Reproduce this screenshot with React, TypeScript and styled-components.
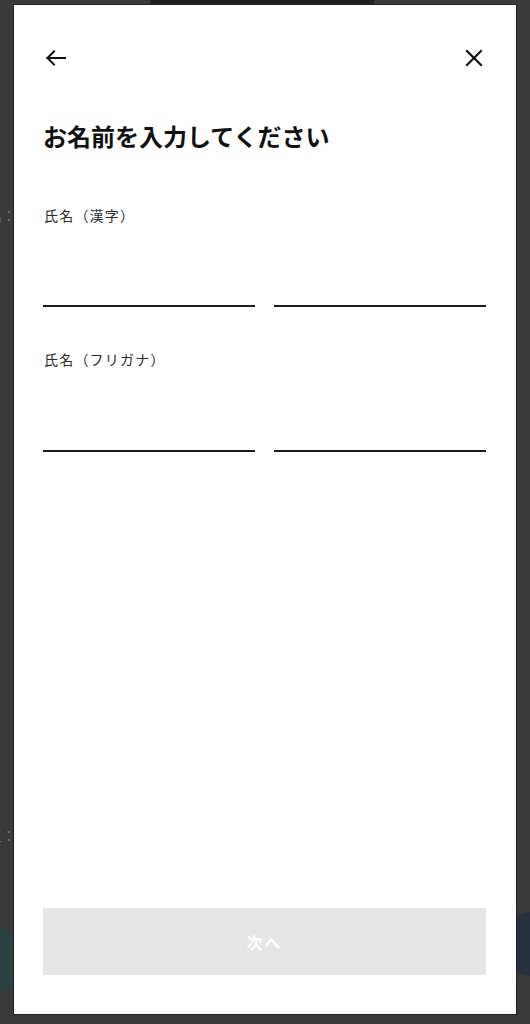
import styled, { createGlobalStyle } from "styled-components";

const GlobalStyle = createGlobalStyle`
  html, body {
    margin: 0;
    padding: 0;
    background: #3a3a3a;
  }
  body {
    font-family: "Noto Sans CJK JP", "Noto Sans", sans-serif;
    color: #111;
  }
  * {
    box-sizing: border-box;
  }
`;

const Page = styled.div`
  position: relative;
  width: 530px;
  height: 1024px;
  padding: 5px 14px 10px 14px;
  overflow: hidden;
`;

/* the page behind the modal, only its edges show */
const Backdrop = styled.div`
  position: absolute;
  inset: 0;
  z-index: 0;
  pointer-events: none;
`;

const TopStrip = styled.div`
  position: absolute;
  top: 0;
  left: 150px;
  width: 224px;
  height: 5px;
  background: #1f1f1f;
`;

const BehindText = styled.span<{ $top: number }>`
  position: absolute;
  top: ${(p) => p.$top}px;
  right: 514px;
  font-size: 14px;
  line-height: 20px;
  color: #7a7a7a;
  white-space: nowrap;
`;

const BehindBlob = styled.div<{ $top: number; $side: "left" | "right"; $color: string }>`
  position: absolute;
  top: ${(p) => p.$top}px;
  ${(p) => (p.$side === "left" ? "left: -50px;" : "right: -50px;")}
  width: 80px;
  height: 64px;
  border-radius: 32px;
  background: ${(p) => p.$color};
`;

const Panel = styled.div`
  position: relative;
  z-index: 1;
  height: 1009px;
  background: #ffffff;
  box-shadow: 0 0 0 1px #202020;
  display: flex;
  flex-direction: column;
  padding: 0 30px 0 29px;
`;

const Header = styled.div`
  display: flex;
  align-items: center;
  justify-content: space-between;
  height: 24px;
  margin-top: 41px;
`;

const IconButton = styled.button`
  display: flex;
  align-items: center;
  justify-content: center;
  width: 24px;
  height: 24px;
  padding: 0;
  border: none;
  background: none;
  cursor: pointer;
  color: #111;
`;

const Title = styled.h1`
  margin: 49px 0 0 0;
  font-size: 24px;
  line-height: 34px;
  font-weight: 700;
  color: #111;
`;

const FieldLabel = styled.label<{ $gap: number }>`
  display: block;
  margin-top: ${(p) => p.$gap}px;
  margin-left: 1px;
  font-size: 14px;
  line-height: 20px;
  letter-spacing: 1.2px;
  color: #2a2a2a;
`;

const InputRow = styled.div<{ $gap: number }>`
  display: grid;
  grid-template-columns: 1fr 1fr;
  column-gap: 19px;
  margin-top: ${(p) => p.$gap}px;
`;

const TextInput = styled.input`
  width: 100%;
  height: 40px;
  padding: 0 2px;
  border: none;
  border-bottom: 2px solid #1c1c1c;
  background: transparent;
  font-family: inherit;
  font-size: 16px;
  color: #111;
  outline: none;
`;

const NextButton = styled.button`
  margin-top: auto;
  margin-bottom: 39px;
  height: 67px;
  width: 100%;
  border: none;
  background: #e4e4e4;
  color: #ffffff;
  font-family: inherit;
  font-size: 16px;
  font-weight: 700;
  letter-spacing: 2px;
  cursor: not-allowed;
`;

const ArrowLeftIcon = () => (
  <svg width="24" height="24" viewBox="0 0 24 24" fill="none" stroke="currentColor" strokeWidth="2" strokeLinecap="square" strokeLinejoin="miter">
    <path d="M22 12H4.5" />
    <path d="M11 5.5L4.5 12L11 18.5" />
  </svg>
);

const CloseIcon = () => (
  <svg width="24" height="24" viewBox="0 0 24 24" fill="none" stroke="currentColor" strokeWidth="2.2" strokeLinecap="square">
    <path d="M5 5L19 19" />
    <path d="M19 5L5 19" />
  </svg>
);

const App = () => {
  return (
    <>
      <GlobalStyle />
      <Page>
        <Backdrop>
          <TopStrip />
          <BehindText $top={205}>氏名：</BehindText>
          <BehindText $top={825}>三：</BehindText>
          <BehindBlob $top={928} $side="left" $color="#2b4242" />
          <BehindBlob $top={912} $side="right" $color="#28303f" />
        </Backdrop>
        <Panel>
          <Header>
            <IconButton aria-label="戻る">
              <ArrowLeftIcon />
            </IconButton>
            <IconButton aria-label="閉じる">
              <CloseIcon />
            </IconButton>
          </Header>

          <Title>お名前を入力してください</Title>

          <FieldLabel $gap={52}>氏名（漢字）</FieldLabel>
          <InputRow $gap={42}>
            <TextInput type="text" aria-label="姓" />
            <TextInput type="text" aria-label="名" />
          </InputRow>

          <FieldLabel $gap={42}>氏名（フリガナ）</FieldLabel>
          <InputRow $gap={43}>
            <TextInput type="text" aria-label="セイ" />
            <TextInput type="text" aria-label="メイ" />
          </InputRow>

          <NextButton disabled>次へ</NextButton>
        </Panel>
      </Page>
    </>
  );
};

export default App;
